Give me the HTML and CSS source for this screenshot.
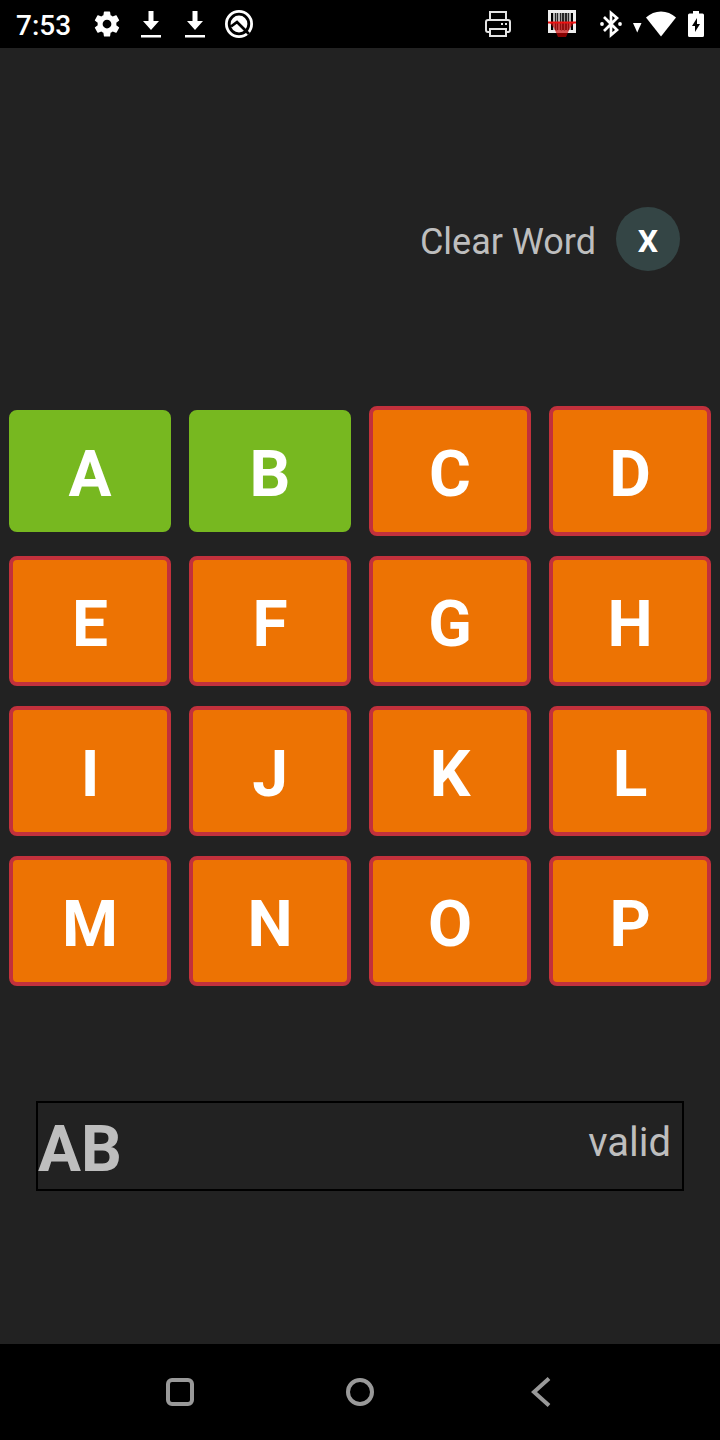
FILE: index.html
```html
<!DOCTYPE html>
<html lang="en">
<head>
<meta charset="utf-8">
<meta name="viewport" content="width=device-width, initial-scale=1">
<title>Word Game</title>
<link rel="stylesheet" href="styles.css">
</head>
<body>
<header class="status">
  <time class="clock">7:53</time>
  <div class="notices">
    <svg width="30" height="30" viewBox="0 0 24 24" fill="#fff"><path d="M19.43 12.98c.04-.32.07-.64.07-.98s-.03-.66-.07-.98l2.11-1.65c.19-.15.24-.42.12-.64l-2-3.46c-.12-.22-.39-.3-.61-.22l-2.49 1c-.52-.4-1.08-.73-1.69-.98l-.38-2.65C14.46 2.18 14.25 2 14 2h-4c-.25 0-.46.18-.49.42l-.38 2.65c-.61.25-1.17.59-1.69.98l-2.49-1c-.23-.09-.49 0-.61.22l-2 3.46c-.13.22-.07.49.12.64l2.11 1.65c-.04.32-.07.65-.07.98s.03.66.07.98l-2.11 1.65c-.19.15-.24.42-.12.64l2 3.46c.12.22.39.3.61.22l2.49-1c.52.4 1.08.73 1.69.98l.38 2.65c.03.24.24.42.49.42h4c.25 0 .46-.18.49-.42l.38-2.65c.61-.25 1.17-.59 1.69-.98l2.49 1c.23.09.49 0 .61-.22l2-3.46c.12-.22.07-.49-.12-.64l-2.11-1.65zM12 15.500a3.500 3.500 0 1 1 0-7 3.500 3.500 0 0 1 0 7z"/></svg>
    <svg width="30" height="30" viewBox="0 0 30 30" fill="#fff"><path d="M12.500 2h5v10h5.500l-8 9-8-9h5.500zM5 26h20v2.500H5z"/></svg>
    <svg width="30" height="30" viewBox="0 0 30 30" fill="#fff"><path d="M12.500 2h5v10h5.500l-8 9-8-9h5.500zM5 26h20v2.500H5z"/></svg>
    <svg width="30" height="30" viewBox="0 0 30 30"><circle cx="15" cy="15" r="12.600" fill="none" stroke="#fff" stroke-width="2.800"/><circle cx="15" cy="15" r="8.400" fill="#fff"/><path d="M7 17.500l6-4.500 12 12" fill="none" stroke="#000" stroke-width="2.800"/></svg>
  </div>
  <div class="system">
    <svg class="printer" width="28" height="28" viewBox="0 0 28 28" fill="none" stroke="#e4e4e4" stroke-width="2"><path d="M6 10V2h16v8M6 22H4a2 2 0 0 1-2-2v-8a2 2 0 0 1 2-2h20a2 2 0 0 1 2 2v8a2 2 0 0 1-2 2h-2M6 19h16v7H6z"/><path d="M17 14h2m2 0h2"/></svg>
    <svg class="scanner" width="28" height="28" viewBox="0 0 28 28"><path d="M1.500 1.500h25v20h-25z" fill="#000" stroke="#eee" stroke-width="3"/><path d="M6 3v18M11 3v18M22 3v18" stroke="#eee" stroke-width="1.500"/><path d="M8.500 3v18M13.500 3v18M16.500 3v18M19.500 3v18" stroke="#999" stroke-width="1.500"/><path d="M1 12h26l-5 6-4 9h-8l-4-9z" fill="#c00" opacity=".65"/><path d="M0 12.500h28" stroke="#f01010" stroke-width="2"/></svg>
    <svg class="bluetooth" width="24" height="28" viewBox="0 0 24 28"><path d="M5 7l13 13-6 5V3l6 5L5 21" fill="none" stroke="#fff" stroke-width="2.700"/><circle cx="3" cy="14" r="1.900" fill="#fff"/><circle cx="21" cy="14" r="1.900" fill="#fff"/></svg>
    <svg class="signal" width="10" height="28" viewBox="0 0 10 28"><path d="M1 13h8.500L5.250 22.500z" fill="#fff"/></svg>
    <svg class="wifi" width="30" height="28" viewBox="0 0 30 28"><path d="M0 7.500Q6.500 1.500 15 1.500t15 6L15 26.500z" fill="#fff"/></svg>
    <svg class="battery" width="16" height="28" viewBox="0 0 16 28"><path d="M5 1h6v2.500h3.500A1.500 1.500 0 0 1 16 5v20.500a1.500 1.500 0 0 1-1.500 1.500h-13A1.500 1.500 0 0 1 0 25.500V5a1.500 1.500 0 0 1 1.500-1.500H5z" fill="#fff"/><path d="M9 8l-5 8h3v6l5-8H9z" fill="#000"/></svg>
  </div>
</header>

<main class="game">
  <div class="clear-row">
    <label class="clear-label" for="clear">Clear Word</label>
    <button class="clear-button" id="clear" type="button">X</button>
  </div>
  <div class="board">
    <button class="tile picked" type="button">A</button>
    <button class="tile picked" type="button">B</button>
    <button class="tile" type="button">C</button>
    <button class="tile" type="button">D</button>
    <button class="tile" type="button">E</button>
    <button class="tile" type="button">F</button>
    <button class="tile" type="button">G</button>
    <button class="tile" type="button">H</button>
    <button class="tile" type="button">I</button>
    <button class="tile" type="button">J</button>
    <button class="tile" type="button">K</button>
    <button class="tile" type="button">L</button>
    <button class="tile" type="button">M</button>
    <button class="tile" type="button">N</button>
    <button class="tile" type="button">O</button>
    <button class="tile" type="button">P</button>
  </div>
  <div class="result">
    <output class="word">AB</output>
    <output class="verdict">valid</output>
  </div>
</main>

<nav class="navbar">
  <button class="nav-button" type="button" aria-label="Recent apps"><svg width="32" height="32" viewBox="0 0 32 32"><rect x="4" y="4" width="24" height="24" rx="4"/></svg></button>
  <button class="nav-button" type="button" aria-label="Home"><svg width="32" height="32" viewBox="0 0 32 32"><circle cx="16" cy="16" r="12"/></svg></button>
  <button class="nav-button" type="button" aria-label="Back"><svg width="32" height="32" viewBox="0 0 32 32"><path d="M25 2.500L10 16l15 13.500"/></svg></button>
</nav>
</body>
</html>
```
FILE: styles.css
```css
* {
  box-sizing: border-box;
}

body {
  margin: 0;
  min-height: 100vh;
  display: flex;
  flex-direction: column;
  background: #222;
  color: #bebebe;
  font-family: Roboto, "Liberation Sans", sans-serif;
}

button {
  margin: 0;
  padding: 0;
  border: 0;
  color: #fff;
  font-family: inherit;
}

svg {
  display: block;
}

.status {
  display: flex;
  align-items: center;
  height: 48px;
  padding: 0 16px;
  background: #000;
}

.clock {
  padding-top: 2px;
  color: #fff;
  font-size: 28px;
  font-weight: 500;
}

.notices {
  display: flex;
  gap: 14px;
  margin-left: 21px;
}

.system {
  display: flex;
  align-items: center;
  margin-left: auto;
}

.printer {
  margin-right: 36px;
}

.scanner {
  margin-right: 23px;
}

.bluetooth {
  margin-right: 9px;
}

.signal {
  margin-right: 4px;
}

.wifi {
  margin-right: 12px;
}

.game {
  flex: 1;
  display: flex;
  flex-direction: column;
}

.clear-row {
  display: flex;
  align-items: center;
  justify-content: flex-end;
  gap: 20px;
  margin: 159px 40px 135px;
}

.clear-label {
  padding-top: 6px;
  font-size: 36px;
}

.clear-button {
  width: 64px;
  height: 64px;
  padding-top: 4px;
  border-radius: 50%;
  background: #344545;
  font-size: 32px;
  font-weight: 700;
}

.board {
  display: grid;
  grid-template-columns: repeat(4, 1fr);
  grid-auto-rows: 130px;
  gap: 20px 18px;
  padding: 0 9px;
}

.tile {
  padding-top: 6px;
  border: 4px solid #c2313c;
  border-radius: 8px;
  background: #ed7303;
  font-size: 64px;
  font-weight: 700;
}

.picked {
  margin: 4px 0;
  border-color: #77b820;
  background: #77b820;
}

.result {
  display: flex;
  align-items: flex-start;
  justify-content: space-between;
  margin: 115px 36px 40px;
  padding: 9px 11px 1px 0;
  border: 2px solid #000;
}

.word {
  font-size: 64px;
  font-weight: 700;
  line-height: 76px;
}

.verdict {
  font-size: 40px;
  line-height: 62px;
}

.navbar {
  display: flex;
  justify-content: center;
  gap: 116px;
  height: 96px;
  background: #000;
}

.nav-button {
  width: 64px;
  display: flex;
  align-items: center;
  justify-content: center;
  background: none;
}

.nav-button svg {
  fill: none;
  stroke: #999;
  stroke-width: 4px;
}
```
